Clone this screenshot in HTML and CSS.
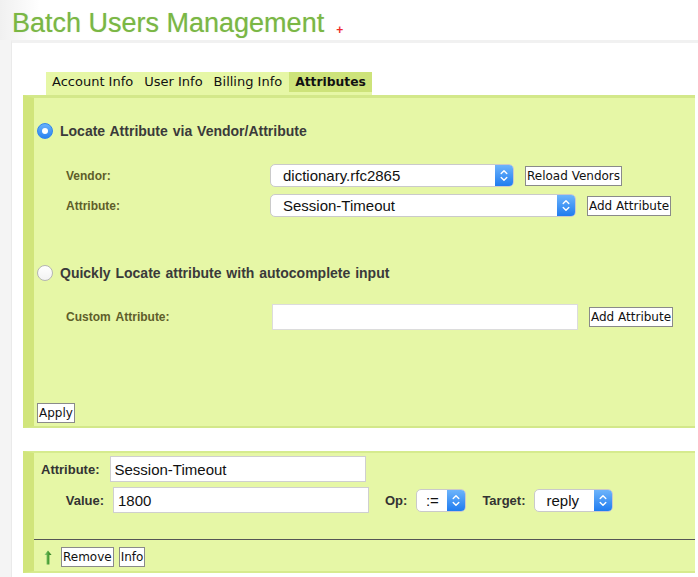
FILE: index.html
```html
<!DOCTYPE html>
<html>
<head>
<meta charset="utf-8">
<link rel="stylesheet" href="styles.css">
</head>
<body>
<div class="header">
  <h1 class="title">Batch Users Management</h1>
  <span class="plus">+</span>
</div>
<div class="content">
  <div class="tabs">
    <span class="tab">Account Info</span>
    <span class="tab">User Info</span>
    <span class="tab">Billing Info</span>
    <span class="tab active">Attributes</span>
  </div>

  <div class="panel main">
    <div class="radio-row">
      <span class="radio on"></span>
      <span class="radio-label">Locate Attribute via Vendor/Attribute</span>
    </div>
    <div class="field-row first">
      <span class="flabel">Vendor:</span>
      <div class="select w-vendor"><span class="sel-text">dictionary.rfc2865</span><span class="sel-btn"><svg width="8" height="13" viewBox="0 0 8 13"><path d="M1.2 4.6 L4 1.8 L6.8 4.6 M1.2 8.4 L4 11.2 L6.8 8.4" fill="none" stroke="#fff" stroke-width="1.4" stroke-linecap="round" stroke-linejoin="round"/></svg></span></div>
      <button class="btn gap">Reload Vendors</button>
    </div>
    <div class="field-row second">
      <span class="flabel">Attribute:</span>
      <div class="select w-attr"><span class="sel-text">Session-Timeout</span><span class="sel-btn"><svg width="8" height="13" viewBox="0 0 8 13"><path d="M1.2 4.6 L4 1.8 L6.8 4.6 M1.2 8.4 L4 11.2 L6.8 8.4" fill="none" stroke="#fff" stroke-width="1.4" stroke-linecap="round" stroke-linejoin="round"/></svg></span></div>
      <button class="btn gap">Add Attribute</button>
    </div>

    <div class="radio-row quick">
      <span class="radio"></span>
      <span class="radio-label">Quickly Locate attribute with autocomplete input</span>
    </div>
    <div class="field-row custom">
      <span class="flabel">Custom Attribute:</span>
      <input class="text custom-input" type="text">
      <button class="btn gap">Add Attribute</button>
    </div>

    <button class="btn apply">Apply</button>
  </div>

  <div class="panel lower">
    <div class="lrow">
      <span class="llabel l-attr">Attribute:</span>
      <input class="text linput in-attr" type="text" value="Session-Timeout">
    </div>
    <div class="lrow r2">
      <span class="llabel l-val">Value:</span>
      <input class="text linput in-val" type="text" value="1800">
      <span class="llabel l-op">Op:</span>
      <div class="select w-op"><span class="sel-text center">:=</span><span class="sel-btn"><svg width="8" height="13" viewBox="0 0 8 13"><path d="M1.2 4.6 L4 1.8 L6.8 4.6 M1.2 8.4 L4 11.2 L6.8 8.4" fill="none" stroke="#fff" stroke-width="1.4" stroke-linecap="round" stroke-linejoin="round"/></svg></span></div>
      <span class="llabel l-target">Target:</span>
      <div class="select w-target"><span class="sel-text">reply</span><span class="sel-btn"><svg width="8" height="13" viewBox="0 0 8 13"><path d="M1.2 4.6 L4 1.8 L6.8 4.6 M1.2 8.4 L4 11.2 L6.8 8.4" fill="none" stroke="#fff" stroke-width="1.4" stroke-linecap="round" stroke-linejoin="round"/></svg></span></div>
    </div>
    <div class="actions">
      <svg class="uparrow" width="8" height="15" viewBox="0 0 8 15">
        <defs><linearGradient id="ag" x1="0" x2="1" y1="0" y2="0"><stop offset="0" stop-color="#9ed88a"/><stop offset="0.5" stop-color="#4fa43a"/><stop offset="1" stop-color="#2f7d22"/></linearGradient></defs>
        <path d="M4 0.5 L7.6 5 L5.4 5 L5.4 14.5 L2.6 14.5 L2.6 5 L0.4 5 Z" fill="url(#ag)"/>
      </svg>
      <button class="btn">Remove</button>
      <button class="btn info">Info</button>
    </div>
  </div>
</div>
</body>
</html>
```

FILE: styles.css
```css
* { box-sizing: border-box; }

body {
  margin: 0;
  background: #f4f4f4;
  font-family: "Liberation Sans", Arial, sans-serif;
  color: #333;
}

.header {
  height: 40px;
  padding-left: 12px;
  display: flex;
  align-items: flex-start;
  background: linear-gradient(to right, #f0f0f0 0, #ffffff 40px);
}

.title {
  margin: 0;
  padding-top: 10px;
  font-size: 27px;
  line-height: 27px;
  font-weight: normal;
  color: #7ab744;
  text-shadow: 0 0 1px rgba(90, 150, 40, 0.35);
}

.plus {
  margin-left: 12px;
  margin-top: 24px;
  font-size: 12px;
  line-height: 12px;
  font-weight: bold;
  color: #ee2a2a;
}

.content {
  margin-left: 11px;
  min-height: 537px;
  background: #fff;
  border-top: 3px solid #f1f1f1;
  border-left: 1px solid #eaeaea;
  padding-top: 29px;
}

.tabs {
  display: flex;
  width: fit-content;
  margin-left: 34px;
  padding-bottom: 3px;
  background: #e6f7a6;
  font-family: "DejaVu Sans", Verdana, sans-serif;
  font-size: 13px;
  color: #111;
}

.tab {
  padding: 0 5px 0 6px;
  line-height: 20px;
}

.tab.active {
  margin-left: 2px;
  padding: 0 6px;
  background: #cde37a;
  font-weight: bold;
  font-size: 12.3px;
}

.panel {
  margin-left: 11px;
  margin-right: 3px;
  background: #e6f7a6;
  border-left: 11px solid #d1e57b;
}

.main {
  border-top: 3px solid #d3e88a;
  border-bottom: 2px solid #d3e88a;
  padding: 25px 0 3px 3px;
}

.radio-row {
  display: flex;
  align-items: center;
  gap: 7px;
  height: 16px;
}

.radio-row.quick { margin-top: 48px; }

.radio {
  width: 16px;
  height: 16px;
  border-radius: 50%;
  background: linear-gradient(#ffffff, #f2f2f2);
  border: 1px solid #b5b5b5;
  display: flex;
  align-items: center;
  justify-content: center;
}

.radio.on {
  border: 1px solid #2f86ee;
  background: linear-gradient(#69b1fb, #2a83f0);
}

.radio.on::after {
  content: "";
  width: 6px;
  height: 6px;
  border-radius: 50%;
  background: #fff;
}

.radio-label {
  font-size: 14px;
  font-weight: bold;
  color: #3a3a3a;
  word-spacing: 1px;
}

.field-row {
  display: flex;
  align-items: center;
  margin-left: 29px;
}

.field-row.first { margin-top: 25px; }
.field-row.second { margin-top: 7px; }
.field-row.custom { margin-top: 23px; }

.flabel {
  width: 204px;
  font-size: 12px;
  font-weight: bold;
  color: #5e5e2a;
  word-spacing: 2px;
}

.select {
  display: flex;
  height: 23px;
  background: #fff;
  border: 1px solid #cacaca;
  border-radius: 5px;
  overflow: hidden;
}

.w-vendor { width: 244px; }
.w-attr { width: 306px; }
.w-op { width: 50px; }
.w-target { width: 79px; }

.sel-text {
  flex: 1;
  padding-left: 12px;
  font-size: 15px;
  line-height: 21px;
  color: #111;
}

.sel-text.center {
  padding-left: 0;
  text-align: center;
}

.sel-btn {
  width: 18px;
  display: flex;
  align-items: center;
  justify-content: center;
  background: linear-gradient(#6db4fb, #1f7cf0);
}

.btn {
  font-family: "DejaVu Sans", Verdana, sans-serif;
  font-size: 12px;
  line-height: 16px;
  color: #111;
  background: #fff;
  border: 1px solid #8a8a8a;
  border-radius: 0;
  padding: 1px 1px;
  margin: 0;
}

.btn.gap { margin-left: 11px; }

.text {
  font-family: "Liberation Sans", Arial, sans-serif;
  font-size: 15px;
  color: #111;
  background: #fff;
  border: 1px solid #dcdcdc;
  margin: 0;
  outline: none;
}

.custom-input {
  width: 306px;
  height: 26px;
  margin-left: 2px;
}

.apply {
  margin-top: 73px;
  display: block;
}

.lower {
  margin-top: 23px;
  border-top: 2px solid #d6eb8e;
  border-bottom: 2px solid #d6eb8e;
  padding-top: 3px;
}

.lrow {
  display: flex;
  align-items: center;
}

.lrow.r2 { margin-top: 5px; }

.llabel {
  font-size: 13px;
  font-weight: bold;
  color: #333;
}

.l-attr { padding-left: 7px; }
.l-val { width: 70px; text-align: right; }
.l-op { margin-left: 16px; margin-right: 9px; }
.l-target { margin-left: 16px; margin-right: 8px; }

.linput {
  width: 256px;
  height: 26px;
  padding: 0 4px;
  border: 1px solid #cfcfcf;
}

.in-attr { margin-left: 10px; }
.in-val { margin-left: 9px; }

.actions {
  margin-top: 26px;
  border-top: 1px solid #555;
  display: flex;
  align-items: center;
  padding: 7px 0 4px 10px;
}

.uparrow { margin-right: 9px; }

.info { margin-left: 5px; }
```
